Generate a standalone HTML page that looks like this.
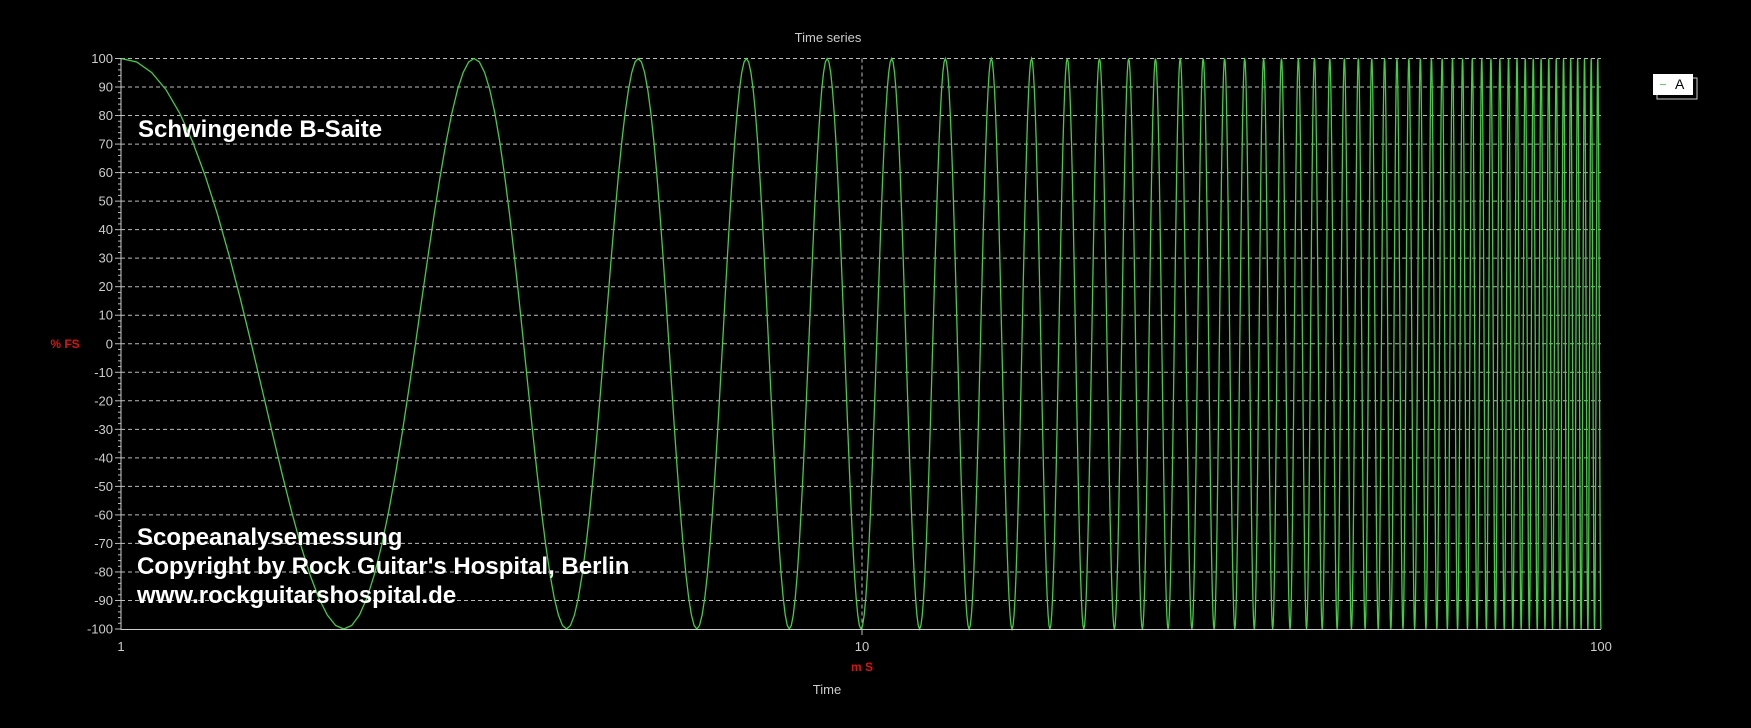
<!DOCTYPE html>
<html><head><meta charset="utf-8"><style>
html,body{margin:0;padding:0;background:#000;width:1751px;height:728px;overflow:hidden}
svg{display:block}
text{font-family:"Liberation Sans",Arial,sans-serif}
</style></head><body>
<svg id="s" width="1751" height="728" viewBox="0 0 1751 728">
<rect width="1751" height="728" fill="#000"/>
<g id="grid" stroke="#bbb" stroke-width="1" stroke-dasharray="4,3"></g>
<g id="ticks" stroke="#bbb" stroke-width="1"></g>
<g id="ylab" fill="#ccc" font-size="13" text-anchor="end"></g>
<path id="wave" fill="none" stroke="#3fcf3f" stroke-width="1.3"/>
<line x1="121" y1="58" x2="121" y2="630" stroke="#ccc"/>
<line x1="121" y1="629.5" x2="1601" y2="629.5" stroke="#ccc"/>
<text x="828" y="42" fill="#ccc" font-size="13" text-anchor="middle">Time series</text>
<text x="65" y="348" fill="#e01010" font-size="12" font-weight="bold" text-anchor="middle">% FS</text>
<text x="121" y="651" fill="#ccc" font-size="13" text-anchor="middle">1</text>
<text x="862" y="651" fill="#ccc" font-size="13" text-anchor="middle">10</text>
<text x="1601" y="651" fill="#ccc" font-size="13" text-anchor="middle">100</text>
<text x="862" y="671" fill="#e01010" font-size="12" font-weight="bold" text-anchor="middle">m S</text>
<text x="827" y="694" fill="#ccc" font-size="13" text-anchor="middle">Time</text>
<g fill="#fff" font-size="24" font-weight="bold">
<text x="138" y="137">Schwingende B-Saite</text>
<text x="137" y="545">Scopeanalysemessung</text>
<text x="137" y="574">Copyright by Rock Guitar's Hospital, Berlin</text>
<text x="137" y="603">www.rockguitarshospital.de</text>
</g>
<rect x="1657" y="78" width="40" height="21" fill="none" stroke="#ccc"/>
<rect x="1653" y="74" width="40" height="21" fill="#fff"/>
<line x1="1660" y1="84.5" x2="1666" y2="84.5" stroke="#6c6"/>
<text x="1675" y="89" fill="#000" font-size="14">A</text>
</svg>
<script>
var ns="http://www.w3.org/2000/svg";
function el(p,n,a){var e=document.createElementNS(ns,n);for(var k in a)e.setAttribute(k,a[k]);p.appendChild(e);return e;}
var y0=58.5,y1=629,L=121,R=1601;
function Y(v){return y0+(100-v)/200*(y1-y0);}
function X(t){return L+(R-L)/2*Math.log10(t);}
var g=document.getElementById('grid'),tk=document.getElementById('ticks'),yl=document.getElementById('ylab');
for(var v=100;v>=-100;v-=10){var y=Y(v);
 if(v>-100)el(g,'line',{x1:L,y1:y,x2:R,y2:y});
 el(tk,'line',{x1:115,y1:y,x2:121,y2:y});
 var t=el(yl,'text',{x:113,y:y+4.5});t.textContent=v;
 if(v>-100)for(var m=1;m<5;m++){var yy=y+m*(Y(0)-Y(10))/5;el(tk,'line',{x1:118,y1:yy,x2:121,y2:yy});}
}
el(g,'line',{x1:862,y1:y0,x2:862,y2:y1});
el(tk,'line',{x1:862,y1:629,x2:862,y2:635});
var d="",first=true;
for(var t=1;t<=100;t+=0.05){var v=100*Math.cos(Math.PI*(t-1));
 d+=(first?"M":"L")+X(t).toFixed(2)+" "+Y(v).toFixed(1);first=false;}
document.getElementById('wave').setAttribute('d',d);
</script>
</body></html>
